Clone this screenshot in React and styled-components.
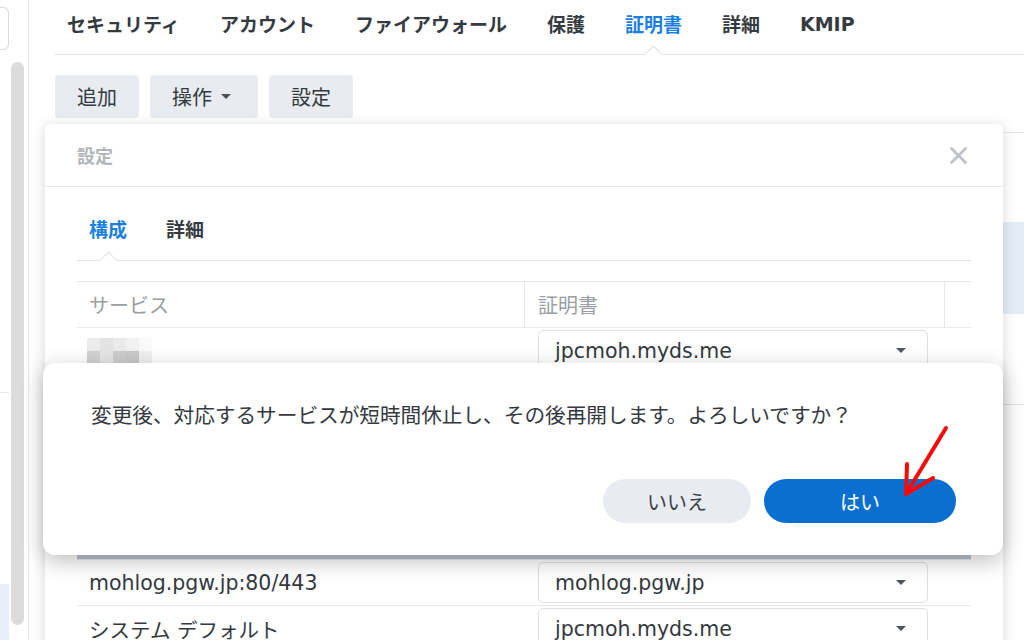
import React from "react";
import styled, { createGlobalStyle, css } from "styled-components";

const GlobalStyle = createGlobalStyle`
  html, body { margin: 0; padding: 0; background: #ffffff; }
  body {
    font-family: "DejaVu Sans", "Noto Sans CJK JP", sans-serif;
    color: #333a40;
  }
  * { box-sizing: border-box; }
`;

const FONT = `"DejaVu Sans", "Noto Sans CJK JP", sans-serif`;

const Page = styled.div`
  position: relative;
  width: 1024px;
  height: 640px;
  overflow: hidden;
  display: flex;
  background: #fff;
  font-family: ${FONT};
`;

/* ---------- sidebar ---------- */
const Sidebar = styled.aside`
  width: 29px;
  flex: none;
  display: flex;
  gap: 2px;
  border-right: 1px solid #e3e7ec;
`;

const SideCol = styled.div`
  width: 9px;
  display: flex;
  flex-direction: column;
`;

const SearchBox = styled.div`
  margin-top: 7px;
  height: 43px;
  border: 1px solid #d6dbe1;
  border-left: none;
  border-radius: 0 6px 6px 0;
  background: #fff;
`;

const SideDivider = styled.div`
  margin-top: 342px;
  height: 1px;
  background: #e4e7eb;
`;

const SideSelected = styled.div`
  margin-top: auto;
  height: 56px;
  background: #e7effa;
`;

const ScrollTrack = styled.div`
  width: 13px;
  padding: 62px 0 15px;
  display: flex;
`;

const ScrollThumb = styled.div`
  flex: 1;
  border-radius: 7px;
  background: #dcdcdc;
`;

/* ---------- main page ---------- */
const Main = styled.main`
  flex: 1;
  padding-left: 26px;
  display: flex;
  flex-direction: column;
`;

const notch = css`
  &::after {
    content: "";
    position: absolute;
    left: 50%;
    bottom: -7px;
    width: 12px;
    height: 12px;
    margin-left: -6px;
    background: #fff;
    border-top: 1px solid #dfe3e8;
    border-left: 1px solid #dfe3e8;
    transform: rotate(45deg);
  }
`;

const TabBar = styled.nav`
  height: 55px;
  display: flex;
  align-items: stretch;
  gap: 40px;
  padding-left: 12px;
  border-bottom: 1px solid #dfe3e8;
`;

const Tab = styled.div`
  position: relative;
  display: flex;
  align-items: center;
  padding-bottom: 7px;
  font-size: 19px;
  font-weight: 700;
  color: ${(p) => (p.$active ? "#1a80e0" : "#353b41")};
  ${(p) => p.$active && notch}
`;

const Toolbar = styled.div`
  margin-top: 20px;
  display: flex;
  gap: 11px;
`;

const ToolButton = styled.button`
  height: 43px;
  padding: 0 22px;
  display: flex;
  align-items: center;
  border: none;
  border-radius: 4px;
  background: #e8ecf0;
  font-family: ${FONT};
  font-size: 20px;
  color: #333a40;
`;

const Caret = styled.span`
  width: 0;
  height: 0;
  margin-left: 9px;
  margin-right: 5px;
  border-left: 5px solid transparent;
  border-right: 5px solid transparent;
  border-top: 5px solid ${(p) => p.$color || "#4a4f55"};
`;

const CertList = styled.div`
  margin-top: 14px;
  border-top: 1px solid #e3e6ea;
`;

const CertRow = styled.div`
  height: ${(p) => p.$h}px;
  background: ${(p) => (p.$selected ? "#e4ecf7" : "transparent")};
  border-bottom: ${(p) => (p.$last ? "1px solid #e3e6ea" : "none")};
`;

/* ---------- settings window ---------- */
const SettingsWindow = styled.section`
  position: absolute;
  left: 45px;
  top: 124px;
  width: 958px;
  height: 580px;
  background: #fff;
  border-radius: 6px;
  box-shadow: 0 2px 14px rgba(0, 0, 0, 0.16);
`;

const WindowHeader = styled.header`
  height: 63px;
  padding: 0 36px 0 32px;
  display: flex;
  align-items: center;
  justify-content: space-between;
  border-bottom: 1px solid #e4e7eb;
`;

const WindowTitle = styled.h2`
  margin: 0;
  font-size: 18px;
  font-weight: 700;
  color: #b2b6bb;
`;

const CloseButton = styled.span`
  display: flex;
  width: 17px;
  height: 17px;
`;

const WindowBody = styled.div`
  padding: 0 32px;
`;

const SubTabs = styled.nav`
  height: 74px;
  display: flex;
  align-items: flex-end;
  gap: 39px;
  padding: 0 0 0 12px;
  border-bottom: 1px solid #dfe3e8;
`;

const SubTab = styled.div`
  position: relative;
  height: 44px;
  font-size: 19px;
  font-weight: 700;
  line-height: 28px;
  color: ${(p) => (p.$active ? "#1a80e0" : "#353b41")};
  ${(p) => p.$active && notch}
`;

const Table = styled.div`
  margin-top: 20px;
  border-top: 1px solid #e4e7eb;
`;

const Row = styled.div`
  display: grid;
  grid-template-columns: 448px 420px 1fr;
  height: ${(p) => p.$h || 46}px;
  align-items: center;
  border-bottom: 1px solid #e8ebee;
  background: ${(p) => (p.$selected ? "#bcc4ce" : "transparent")};
`;

const HeadCell = styled.div`
  height: 100%;
  display: flex;
  align-items: center;
  padding-left: ${(p) => (p.$first ? 12 : 13)}px;
  border-right: ${(p) => (p.$last ? "none" : "1px solid #e4e7eb")};
  font-size: 20px;
  color: #9b9ea2;
`;

const Cell = styled.div`
  display: flex;
  align-items: center;
  padding-left: ${(p) => (p.$first ? 12 : 13)}px;
  font-size: 20.5px;
  color: #34393f;
  white-space: nowrap;
`;

const Select = styled.div`
  width: 390px;
  height: 41px;
  padding: 0 16px;
  display: flex;
  align-items: center;
  justify-content: space-between;
  border: 1px solid #dbe0e6;
  border-radius: 5px;
  background: #fff;
  font-size: 20.5px;
  color: #34393f;
`;

const Mosaic = styled.svg`
  display: block;
  margin-left: -2px;
`;

/* ---------- confirm dialog ---------- */
const ConfirmDialog = styled.div`
  position: absolute;
  left: 43px;
  top: 363px;
  width: 960px;
  height: 192px;
  padding: 39px 47px 32px 48px;
  display: flex;
  flex-direction: column;
  justify-content: space-between;
  background: #fff;
  border-radius: 12px;
  box-shadow: 0 6px 22px rgba(0, 0, 0, 0.26);
`;

const Message = styled.p`
  margin: 0;
  font-size: 20.7px;
  letter-spacing: -0.05px;
  line-height: 28px;
  color: #34393f;
`;

const Actions = styled.div`
  display: flex;
  justify-content: flex-end;
  gap: 13px;
`;

const PillButton = styled.button`
  width: ${(p) => p.$w}px;
  height: 44px;
  border: none;
  border-radius: 22px;
  font-family: ${FONT};
  font-size: 20px;
  background: ${(p) => (p.$primary ? "#0b6fcf" : "#e8ecf1")};
  color: ${(p) => (p.$primary ? "#ffffff" : "#3a3f45")};
`;

const Annotation = styled.svg`
  position: absolute;
  left: 0;
  top: 0;
  pointer-events: none;
`;

const mainTabs = ["セキュリティ", "アカウント", "ファイアウォール", "保護", "証明書", "詳細", "KMIP"];

const mosaicCells = [
  ["#ececec", "#e3e3e3", "#eaeaea", "#f1f1f1", "#fafafa"],
  ["#d2d2d2", "#e6e6e6", "#cdcdcd", "#cacaca", "#f0f0f0"],
];

export default function App() {
  return (
    <>
      <GlobalStyle />
      <Page>
        <Sidebar>
          <SideCol>
            <SearchBox />
            <SideDivider />
            <SideSelected />
          </SideCol>
          <ScrollTrack>
            <ScrollThumb />
          </ScrollTrack>
        </Sidebar>

        <Main>
          <TabBar>
            {mainTabs.map((t) => (
              <Tab key={t} $active={t === "証明書"}>
                {t}
              </Tab>
            ))}
          </TabBar>
          <Toolbar>
            <ToolButton>追加</ToolButton>
            <ToolButton>
              操作
              <Caret />
            </ToolButton>
            <ToolButton>設定</ToolButton>
          </Toolbar>
          <CertList>
            <CertRow $h={89} />
            <CertRow $h={92} $selected />
            <CertRow $h={91} $last />
          </CertList>
        </Main>

        <SettingsWindow>
          <WindowHeader>
            <WindowTitle>設定</WindowTitle>
            <CloseButton>
              <svg width="17" height="17" viewBox="0 0 17 17">
                <path d="M1.5 1.5 L15.5 15.5 M15.5 1.5 L1.5 15.5" stroke="#bfc2c6" strokeWidth="2.8" strokeLinecap="round" />
              </svg>
            </CloseButton>
          </WindowHeader>
          <WindowBody>
            <SubTabs>
              <SubTab $active>構成</SubTab>
              <SubTab>詳細</SubTab>
            </SubTabs>
            <Table>
              <Row>
                <HeadCell $first>サービス</HeadCell>
                <HeadCell>証明書</HeadCell>
                <HeadCell $last />
              </Row>
              <Row>
                <Cell $first>
                  <Mosaic width="70" height="26" viewBox="0 0 70 26">
                    {mosaicCells.map((line, r) =>
                      line.map((c, i) => (
                        <rect key={`${r}-${i}`} x={i * 13} y={r * 13} width="13" height="13" fill={c} />
                      ))
                    )}
                  </Mosaic>
                </Cell>
                <Cell>
                  <Select>
                    jpcmoh.myds.me
                    <Caret $color="#50565c" />
                  </Select>
                </Cell>
                <Cell />
              </Row>
              <Row />
              <Row />
              <Row />
              <Row $selected $h={48} />
              <Row>
                <Cell $first>mohlog.pgw.jp:80/443</Cell>
                <Cell>
                  <Select>
                    mohlog.pgw.jp
                    <Caret $color="#50565c" />
                  </Select>
                </Cell>
                <Cell />
              </Row>
              <Row>
                <Cell $first>システム デフォルト</Cell>
                <Cell>
                  <Select>
                    jpcmoh.myds.me
                    <Caret $color="#50565c" />
                  </Select>
                </Cell>
                <Cell />
              </Row>
            </Table>
          </WindowBody>
        </SettingsWindow>

        <ConfirmDialog>
          <Message>変更後、対応するサービスが短時間休止し、その後再開します。よろしいですか？</Message>
          <Actions>
            <PillButton $w={148}>いいえ</PillButton>
            <PillButton $w={192} $primary>
              はい
            </PillButton>
          </Actions>
        </ConfirmDialog>

        <Annotation width="1024" height="640" viewBox="0 0 1024 640">
          <g stroke="#f50a0a" strokeWidth="4" strokeLinecap="round" strokeLinejoin="round" fill="none">
            <path d="M946 428 L906 494" />
            <path d="M907 464 L906 494 L933 478" />
          </g>
        </Annotation>
      </Page>
    </>
  );
}
